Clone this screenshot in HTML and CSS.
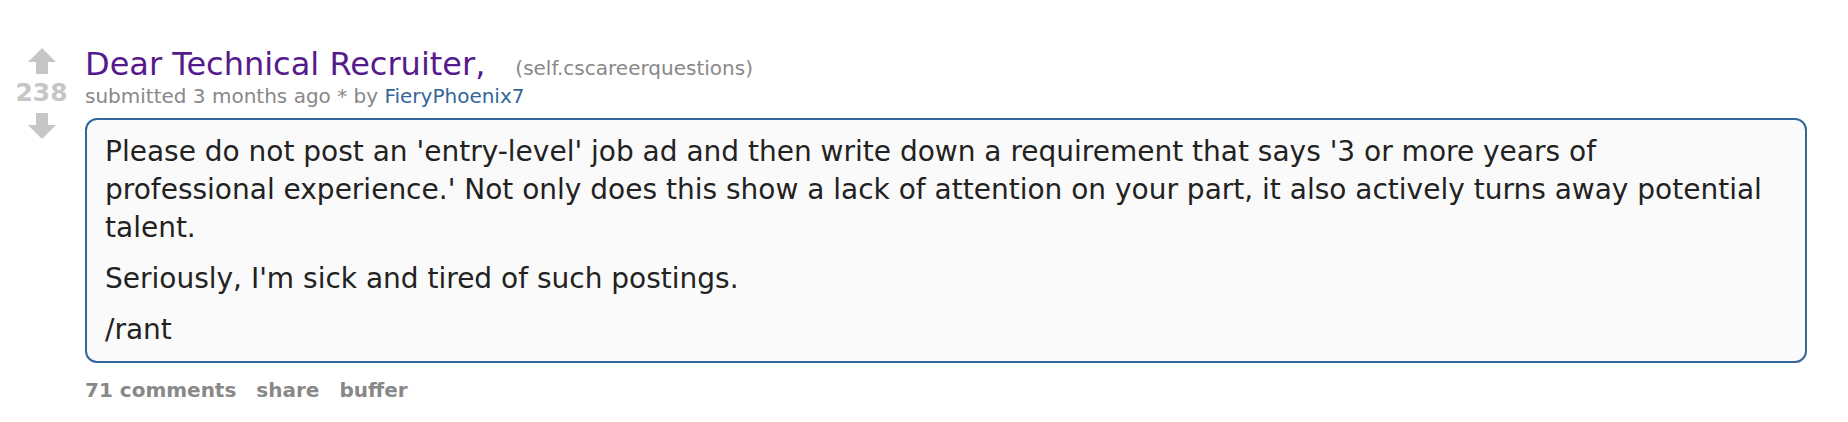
FILE: index.html
```html
<!DOCTYPE html>
<html>
<head>
<meta charset="utf-8">
<link rel="stylesheet" href="styles.css">
</head>
<body>
<div class="thing">
  <div class="midcol">
    <svg class="arrow up" width="28" height="26" viewBox="0 0 28 26" aria-label="upvote">
      <path d="M14 0 L28 14 L20 14 L20 26 L8 26 L8 14 L0 14 Z"/>
    </svg>
    <div class="score">238</div>
    <svg class="arrow down" width="28" height="26" viewBox="0 0 28 26" aria-label="downvote">
      <path d="M14 26 L28 12 L20 12 L20 0 L8 0 L8 12 L0 12 Z"/>
    </svg>
  </div>
  <div class="entry">
    <p class="title-row"><a class="title" href="#">Dear Technical Recruiter,</a><span class="domain">(self.cscareerquestions)</span></p>
    <p class="tagline">submitted 3 months ago * by <a class="author" href="#">FieryPhoenix7</a></p>
    <div class="usertext">
      <p>Please do not post an 'entry-level' job ad and then write down a requirement that says '3 or more years of professional experience.' Not only does this show a lack of attention on your part, it also actively turns away potential talent.</p>
      <p>Seriously, I'm sick and tired of such postings.</p>
      <p>/rant</p>
    </div>
    <ul class="buttons">
      <li>71 comments</li>
      <li>share</li>
      <li>buffer</li>
    </ul>
  </div>
</div>
</body>
</html>
```
FILE: styles.css
```css
html, body {
  margin: 0;
  padding: 0;
  background: #ffffff;
}

body {
  font-family: "DejaVu Sans", Verdana, sans-serif;
}

.thing {
  display: flex;
  align-items: flex-start;
  padding: 48px 41px 0 10px;
}

.midcol {
  width: 63px;
  flex: none;
  display: flex;
  flex-direction: column;
  align-items: center;
}

.arrow {
  display: block;
  fill: #c6c6c6;
}

.score {
  margin-top: 5px;
  font-size: 25px;
  font-weight: bold;
  line-height: 28px;
  color: #c6c6c6;
}

.arrow.down {
  margin-top: 6px;
}

.entry {
  flex: 1;
  margin-left: 12px;
  min-width: 0;
}

.title-row {
  margin: 0;
  display: flex;
  align-items: baseline;
  gap: 30px;
  line-height: 32px;
}

.title {
  font-size: 32px;
  color: #551a8b;
  text-decoration: none;
}

.domain {
  font-size: 20px;
  color: #888888;
}

.tagline {
  margin: 0;
  font-size: 20px;
  line-height: 24px;
  color: #888888;
}

.author {
  color: #336699;
  text-decoration: none;
}

.usertext {
  margin-top: 10px;
  background: #fafafa;
  border: 2px solid #336699;
  border-radius: 12px;
  padding: 13px 36px 12px 18px;
  font-size: 28px;
  line-height: 38px;
  color: #222222;
}

.usertext p {
  margin: 0;
}

.usertext p + p {
  margin-top: 13px;
}

.buttons {
  list-style: none;
  margin: 15px 0 0;
  padding: 0;
  display: flex;
  gap: 20px;
  font-size: 20px;
  font-weight: bold;
  line-height: 24px;
  color: #888888;
}
```
